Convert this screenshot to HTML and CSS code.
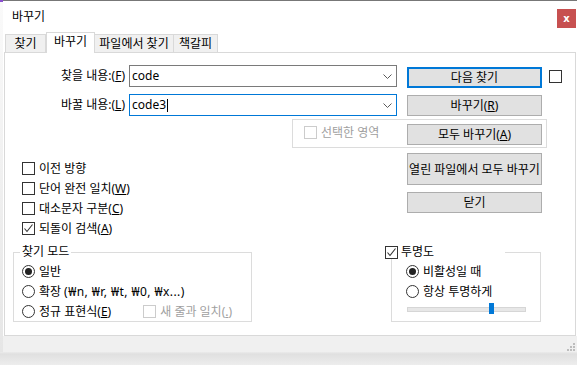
FILE: index.html
```html
<!DOCTYPE html>
<html lang="ko">

<head>
  <meta charset="UTF-8">
  <meta name="viewport" content="width=device-width, initial-scale=1.0">
  <title>바꾸기</title>
  <link rel="stylesheet" href="styles.css">
</head>

<body>

  <div class="editor-edge"></div>

  <div class="dialog">
    <div class="titlebar">
      <span class="title">바꾸기</span>
      <button class="close">x</button>
    </div>

    <div class="tabs">
      <div class="tab tab-find">찾기</div>
      <div class="tab tab-active">바꾸기</div>
      <div class="tab tab-files">파일에서 찾기</div>
      <div class="tab tab-marks">책갈피</div>
    </div>

    <div class="panel">
      <!-- 찾을 내용 -->
      <div class="field-row row-find">
        <label class="field-label">찾을 내용:(<u>F</u>)</label>
        <div class="combo">
          <span class="combo-text">code</span>
          <svg class="chevron" width="9" height="5" viewBox="0 0 9 5"><polyline points="0.5,0.5 4.5,4.5 8.5,0.5" fill="none" stroke="#5a5a5a" stroke-width="1"/></svg>
        </div>
        <button class="btn btn-default">다음 찾기</button>
        <span class="check check-side"></span>
      </div>

      <!-- 바꿀 내용 -->
      <div class="field-row row-replace">
        <label class="field-label">바꿀 내용:(<u>L</u>)</label>
        <div class="combo combo-focus">
          <span class="combo-text">code3<span class="caret"></span></span>
          <svg class="chevron" width="9" height="5" viewBox="0 0 9 5"><polyline points="0.5,0.5 4.5,4.5 8.5,0.5" fill="none" stroke="#5a5a5a" stroke-width="1"/></svg>
        </div>
        <button class="btn">바꾸기(<u>R</u>)</button>
      </div>

      <!-- 선택한 영역 -->
      <div class="scope">
        <span class="check check-disabled"></span>
        <span class="text-disabled">선택한 영역</span>
        <button class="btn btn-all">모두 바꾸기(<u>A</u>)</button>
      </div>

      <div class="middle">
        <div class="options">
          <div class="opt"><span class="check"></span>이전 방향</div>
          <div class="opt"><span class="check"></span>단어 완전 일치(<u>W</u>)</div>
          <div class="opt"><span class="check"></span>대소문자 구분(<u>C</u>)</div>
          <div class="opt">
            <span class="check"><svg width="11" height="11" viewBox="0 0 11 11"><polyline points="1.5,5.5 4,8.5 9.5,1.5" fill="none" stroke="#333" stroke-width="1.1"/></svg></span>되돌이 검색(<u>A</u>)
          </div>
        </div>
        <div class="actions">
          <button class="btn btn-tall">열린 파일에서 모두 바꾸기</button>
          <button class="btn">닫기</button>
        </div>
      </div>

      <div class="bottom">
        <fieldset class="group group-mode">
          <legend>찾기 모드</legend>
          <div class="opt"><span class="radio radio-on"></span>일반</div>
          <div class="opt"><span class="radio"></span>확장 <span class="escapes">(₩n, ₩r, ₩t, ₩0, ₩x...)</span></div>
          <div class="opt">
            <span class="radio"></span>정규 표현식(<u>E</u>)
            <span class="check check-disabled check-newline"></span><span class="text-disabled">새 줄과 일치(<u>.</u>)</span>
          </div>
        </fieldset>

        <fieldset class="group group-trans">
          <legend>
            <span class="check"><svg width="11" height="11" viewBox="0 0 11 11"><polyline points="1.5,5.5 4,8.5 9.5,1.5" fill="none" stroke="#333" stroke-width="1.1"/></svg></span>투명도
          </legend>
          <div class="opt"><span class="radio radio-on"></span>비활성일 때</div>
          <div class="opt"><span class="radio"></span>항상 투명하게</div>
          <div class="slider-row">
            <div class="track"><span class="thumb"></span></div>
          </div>
        </fieldset>
      </div>
    </div>

    <div class="footer">
      <svg class="grip" width="10" height="10" viewBox="0 0 10 10">
        <rect x="7" y="1" width="2" height="2" fill="#bdbdbd"/>
        <rect x="4" y="4" width="2" height="2" fill="#bdbdbd"/>
        <rect x="7" y="4" width="2" height="2" fill="#bdbdbd"/>
        <rect x="1" y="7" width="2" height="2" fill="#bdbdbd"/>
        <rect x="4" y="7" width="2" height="2" fill="#bdbdbd"/>
        <rect x="7" y="7" width="2" height="2" fill="#bdbdbd"/>
      </svg>
    </div>
  </div>

</body>

</html>
```

FILE: styles.css
```css
* {
  box-sizing: border-box;
}

body {
  margin: 0;
  width: 577px;
  height: 365px;
  overflow: hidden;
  display: flex;
  align-items: flex-start;
  background: linear-gradient(#ebebeb 0, #ebebeb 352px, #e0e0e0 354px, #ededed 365px);
  font-family: "Noto Sans", "Noto Sans CJK KR", sans-serif;
  font-size: 12px;
  color: #000;
}

u {
  text-decoration: underline;
  text-underline-offset: 1px;
}

.editor-edge {
  width: 3px;
  height: 352px;
  background: linear-gradient(#fafafa, #e6e6e6);
  border-top: 2px solid #8a4fd0;
}

.dialog {
  width: 574px;
  height: 352px;
  background: #fff;
  border-top: 1px solid #777;
  display: flex;
  flex-direction: column;
}

/* title */
.titlebar {
  height: 31px;
  display: flex;
  align-items: flex-start;
  padding-left: 9px;
}

.title {
  margin-top: 8px;
  line-height: 16px;
  font-size: 12px;
}

.close {
  margin-left: auto;
  margin-top: 8px;
  margin-right: 1px;
  width: 19px;
  height: 19px;
  padding: 0;
  border: none;
  background: #c75050;
  color: #fff;
  font-family: "DejaVu Sans", sans-serif;
  font-weight: bold;
  font-size: 10px;
  line-height: 17px;
}

/* tabs */
.tabs {
  height: 20px;
  display: flex;
  align-items: flex-end;
  padding-left: 2px;
  position: relative;
  z-index: 1;
}

.tab {
  height: 18px;
  border: 1px solid #d9d9d9;
  border-bottom: none;
  background: #f0f0f0;
  text-align: center;
  line-height: 17px;
}

.tab-find {
  width: 41px;
}

.tab-active {
  width: 49px;
  height: 21px;
  margin-bottom: -1px;
  background: #fff;
  line-height: 18px;
}

.tab-files {
  width: 79px;
  border-left: none;
}

.tab-marks {
  width: 44px;
  border-left: none;
}

/* panel */
.panel {
  margin: 0 1px;
  border: 1px solid #d9d9d9;
  padding: 12px 0 13px 0;
  display: flex;
  flex-direction: column;
}

.field-row {
  display: flex;
  align-items: flex-start;
}

.row-find {
  height: 29px;
}

.row-replace {
  height: 25px;
}

.field-label {
  width: 120px;
  text-align: right;
  line-height: 21px;
}

.combo {
  margin-left: 4px;
  width: 268px;
  height: 22px;
  border: 1px solid #7a7a7a;
  display: flex;
  align-items: center;
  padding: 0 4px 0 2px;
}

.combo-focus {
  border-color: #0078d7;
}

.combo-text {
  line-height: 18px;
  display: flex;
  align-items: center;
}

.caret {
  width: 1px;
  height: 13px;
  background: #000;
  margin-left: 1px;
}

.chevron {
  margin-left: auto;
}

.btn {
  width: 135px;
  height: 21px;
  padding: 0;
  background: #e1e1e1;
  border: 1px solid #adadad;
  font-family: inherit;
  font-size: 12px;
  color: #000;
  line-height: 17px;
}

.field-row .btn {
  margin-left: 10px;
}

.row-find .btn {
  margin-top: 2px;
}

.row-replace .btn {
  margin-top: 1px;
}

.btn-default {
  border: 2px solid #0078d7;
}

.check {
  width: 13px;
  height: 13px;
  border: 1px solid #333;
  background: #fff;
  display: inline-flex;
  align-items: center;
  justify-content: center;
  flex-shrink: 0;
  margin-right: 4px;
}

.check-side {
  margin-left: 7px;
  margin-top: 5px;
}

.check-disabled {
  border-color: #cccccc;
}

.text-disabled {
  color: #a0a0a0;
}

/* 선택한 영역 */
.scope {
  margin-left: 287px;
  width: 255px;
  height: 29px;
  border: 1px solid #dcdcdc;
  display: flex;
  align-items: flex-start;
  padding: 4px 4px 0 11px;
}

.scope .check {
  margin-top: 2px;
}

.scope .text-disabled {
  line-height: 17px;
}

.btn-all {
  margin-left: auto;
}

/* options + buttons */
.middle {
  height: 97px;
  display: flex;
}

.options {
  width: 402px;
  padding: 10px 0 0 17px;
}

.opt {
  height: 20px;
  display: flex;
  align-items: center;
  white-space: nowrap;
}

.escapes {
  margin-left: 3px;
  letter-spacing: 0.45px;
}

.actions {
  width: 135px;
  padding-top: 5px;
  display: flex;
  flex-direction: column;
  gap: 7px;
}

.btn-tall {
  height: 32px;
}

/* groups */
.bottom {
  display: flex;
  align-items: flex-start;
}

.group {
  margin: 0;
  border: 1px solid #dcdcdc;
  min-width: 0;
  height: 77px;
}

.group legend {
  line-height: 14px;
  font-size: 12px;
}

.group-mode {
  margin-left: 8px;
  width: 239px;
  padding: 2px 0 0 8px;
}

.group-mode legend {
  padding: 0 2px;
  margin-left: -2px;
}

.group-trans {
  margin-left: 139px;
  width: 150px;
  padding: 2px 0 0 14px;
}

.group-trans legend {
  padding: 0;
  margin-left: -21px;
  width: 120px;
  display: flex;
  align-items: center;
}

.group-trans legend .check {
  margin-right: 3px;
}

.radio {
  width: 13px;
  height: 13px;
  border: 1px solid #333;
  border-radius: 50%;
  background: #fff;
  display: inline-flex;
  align-items: center;
  justify-content: center;
  flex-shrink: 0;
  margin-right: 4px;
}

.radio-on::after {
  content: "";
  width: 7px;
  height: 7px;
  border-radius: 50%;
  background: #222;
}

.check-newline {
  margin-left: 32px;
}

.slider-row {
  height: 20px;
  padding: 6px 0 0 1px;
}

.track {
  position: relative;
  width: 119px;
  height: 5px;
  background: #e7e7e7;
  border: 1px solid #d6d6d6;
}

.thumb {
  position: absolute;
  left: 81px;
  top: -5px;
  width: 5px;
  height: 11px;
  background: #0078d7;
}

/* footer */
.footer {
  flex: 1;
  background: #f0f0f0;
  display: flex;
  justify-content: flex-end;
  align-items: flex-end;
}

.grip {
  margin: 0 1px 0 0;
}
```
